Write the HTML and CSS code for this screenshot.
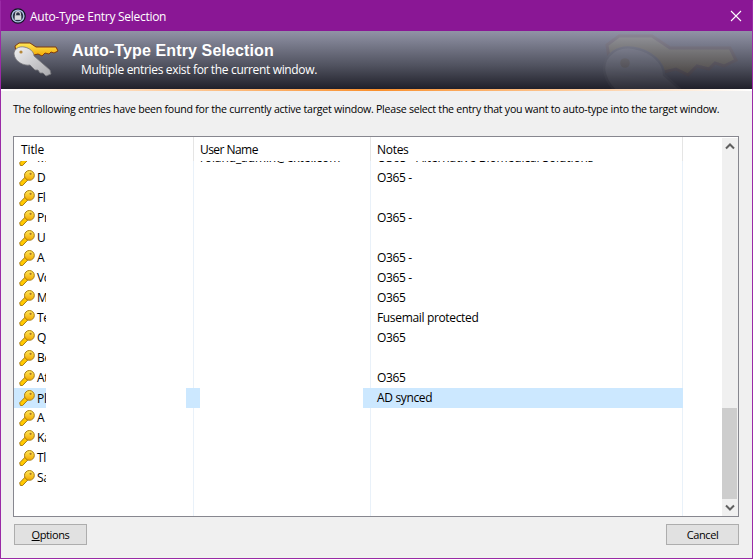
FILE: index.html
```html
<!DOCTYPE html>
<html lang="en">
<head>
<meta charset="utf-8">
<title>Auto-Type Entry Selection</title>
<link rel="stylesheet" href="styles.css">
</head>
<body>
<svg class="defs" width="0" height="0" aria-hidden="true">
  <defs>
    <linearGradient id="gold" x1="0" y1="0" x2="0" y2="1"><stop offset="0" stop-color="#ffe95a"/><stop offset="1" stop-color="#f2a800"/></linearGradient>
    <linearGradient id="silver" x1="0" y1="0" x2="1" y2="1"><stop offset="0" stop-color="#f0f0f2"/><stop offset="1" stop-color="#a9a9ad"/></linearGradient>
    <symbol id="rowkey" viewBox="0 0 16 16">
      <path d="M.7 12.8 6.4 6.8 9.2 9.6 3.6 15.5 1.4 15.5Z" fill="#ffc800" stroke="#a97c12" stroke-width="1"/>
      <circle cx="10.4" cy="5.4" r="4.9" fill="url(#gold)" stroke="#a97c12" stroke-width="1"/>
      <circle cx="11.6" cy="3.8" r="1.1" fill="#a9752a"/>
    </symbol>
    <symbol id="bigkey" viewBox="0 0 48 40">
      <path d="M3 6 7 3 18 3 24 7 44 7 46 11 42 13 39 12 37 14 33 13 30 16 26 14 22 15 14 14 4 12Z" fill="url(#gold)" stroke="#7e3a10" stroke-width="1"/>
      <path d="M2 14C2 9 7 6 12 7 18 8 22 12 22 16L38 30 39 34 34 36 31 33 28 33 26 30 23 30 18 25C12 26 3 22 2 14Z" fill="url(#silver)" stroke="#77777c" stroke-width=".8"/>
      <circle cx="9" cy="12" r="1.6" fill="#b5873a"/>
    </symbol>
  </defs>
</svg>
<div class="window">
  <header class="titlebar">
    <svg class="winicon" viewBox="0 0 16 16" width="16" height="16">
      <circle cx="8" cy="8" r="7.2" fill="#a9bde2" stroke="#10131f" stroke-width="1.2"/>
      <circle cx="8" cy="8" r="5.2" fill="#2c3046"/>
      <path d="M5.6 7.4V6a2.4 2.4 0 0 1 4.8 0v1.4" fill="none" stroke="#d8d8de" stroke-width="1.1"/>
      <rect x="4.7" y="7.3" width="6.6" height="4.6" fill="#d8d8de"/>
    </svg>
    <span class="wintitle">Auto-Type Entry Selection</span>
    <svg class="close" viewBox="0 0 12 12" width="12" height="12"><path d="M1 1 11 11M11 1 1 11" stroke="#fff" stroke-width="1.1"/></svg>
  </header>
  <section class="banner">
    <svg class="watermark" width="144" height="120"><use href="#bigkey"/></svg>
    <svg class="bannerkey" width="48" height="40"><use href="#bigkey"/></svg>
    <div class="bannertext">
      <h1>Auto-Type Entry Selection</h1>
      <p>Multiple entries exist for the current window.</p>
    </div>
  </section>
  <div class="rule"></div>
  <main class="content">
    <p class="intro">The following entries have been found for the currently active target window. Please select the entry that you want to auto-type into the target window.</p>
    <div class="list">
      <div class="listmain">
        <div class="listhead">
          <div class="hcell h1">Title</div>
          <div class="hcell h2">User Name</div>
          <div class="hcell h3">Notes</div>
        </div>
        <div class="rows">
          <div class="row first"><div class="c-title"><svg class="k" width="16" height="16"><use href="#rowkey"/></svg><span>M</span></div><div class="c-gap"></div><div class="c-tail"></div><div class="c-user">roland_admin@extel.com</div><div class="c-notes">O365 - Alternative Biomedical Solutions</div></div>
          <div class="row"><div class="c-title"><svg class="k" width="16" height="16"><use href="#rowkey"/></svg><span>D</span></div><div class="c-gap"></div><div class="c-tail"></div><div class="c-user"></div><div class="c-notes">O365 -</div></div>
          <div class="row"><div class="c-title"><svg class="k" width="16" height="16"><use href="#rowkey"/></svg><span>Fl</span></div><div class="c-gap"></div><div class="c-tail"></div><div class="c-user"></div><div class="c-notes"></div></div>
          <div class="row"><div class="c-title"><svg class="k" width="16" height="16"><use href="#rowkey"/></svg><span>Pr</span></div><div class="c-gap"></div><div class="c-tail"></div><div class="c-user"></div><div class="c-notes">O365 -</div></div>
          <div class="row"><div class="c-title"><svg class="k" width="16" height="16"><use href="#rowkey"/></svg><span>U</span></div><div class="c-gap"></div><div class="c-tail"></div><div class="c-user"></div><div class="c-notes"></div></div>
          <div class="row"><div class="c-title"><svg class="k" width="16" height="16"><use href="#rowkey"/></svg><span>A</span></div><div class="c-gap"></div><div class="c-tail"></div><div class="c-user"></div><div class="c-notes">O365 -</div></div>
          <div class="row"><div class="c-title"><svg class="k" width="16" height="16"><use href="#rowkey"/></svg><span>Vo</span></div><div class="c-gap"></div><div class="c-tail"></div><div class="c-user"></div><div class="c-notes">O365 -</div></div>
          <div class="row"><div class="c-title"><svg class="k" width="16" height="16"><use href="#rowkey"/></svg><span>M</span></div><div class="c-gap"></div><div class="c-tail"></div><div class="c-user"></div><div class="c-notes">O365</div></div>
          <div class="row"><div class="c-title"><svg class="k" width="16" height="16"><use href="#rowkey"/></svg><span>Te</span></div><div class="c-gap"></div><div class="c-tail"></div><div class="c-user"></div><div class="c-notes">Fusemail protected</div></div>
          <div class="row"><div class="c-title"><svg class="k" width="16" height="16"><use href="#rowkey"/></svg><span>Q</span></div><div class="c-gap"></div><div class="c-tail"></div><div class="c-user"></div><div class="c-notes">O365</div></div>
          <div class="row"><div class="c-title"><svg class="k" width="16" height="16"><use href="#rowkey"/></svg><span>Be</span></div><div class="c-gap"></div><div class="c-tail"></div><div class="c-user"></div><div class="c-notes"></div></div>
          <div class="row"><div class="c-title"><svg class="k" width="16" height="16"><use href="#rowkey"/></svg><span>At</span></div><div class="c-gap"></div><div class="c-tail"></div><div class="c-user"></div><div class="c-notes">O365</div></div>
          <div class="row selected"><div class="c-title"><svg class="k" width="16" height="16"><use href="#rowkey"/></svg><span>Pl</span></div><div class="c-gap"></div><div class="c-tail"></div><div class="c-user"></div><div class="c-notes">AD synced</div></div>
          <div class="row"><div class="c-title"><svg class="k" width="16" height="16"><use href="#rowkey"/></svg><span>A</span></div><div class="c-gap"></div><div class="c-tail"></div><div class="c-user"></div><div class="c-notes"></div></div>
          <div class="row"><div class="c-title"><svg class="k" width="16" height="16"><use href="#rowkey"/></svg><span>Ka</span></div><div class="c-gap"></div><div class="c-tail"></div><div class="c-user"></div><div class="c-notes"></div></div>
          <div class="row"><div class="c-title"><svg class="k" width="16" height="16"><use href="#rowkey"/></svg><span>Tl</span></div><div class="c-gap"></div><div class="c-tail"></div><div class="c-user"></div><div class="c-notes"></div></div>
          <div class="row"><div class="c-title"><svg class="k" width="16" height="16"><use href="#rowkey"/></svg><span>Sa</span></div><div class="c-gap"></div><div class="c-tail"></div><div class="c-user"></div><div class="c-notes"></div></div>
        </div>
      </div>
      <div class="scrollbar">
        <svg class="arrow" viewBox="0 0 16 17" width="16" height="17"><path d="M4 10.5 8 6.5 12 10.5" fill="none" stroke="#606060" stroke-width="2"/></svg>
        <div class="track"><div class="thumb"></div></div>
        <svg class="arrow" viewBox="0 0 16 17" width="16" height="17"><path d="M4 6.5 8 10.5 12 6.5" fill="none" stroke="#606060" stroke-width="2"/></svg>
      </div>
    </div>
    <footer class="buttons">
      <button class="btn" type="button"><u>O</u>ptions</button>
      <button class="btn" type="button">Cancel</button>
    </footer>
  </main>
</div>
</body>
</html>
```
FILE: styles.css
```css
* { box-sizing: border-box; }
html, body { margin: 0; padding: 0; }
body { width: 753px; height: 559px; overflow: hidden; font-family: "Open Sans", "Noto Sans", sans-serif; font-size: 12px; color: #000; background: #f0f0f0; }
.defs { display: block; height: 0; }
.window { width: 753px; height: 559px; display: flex; flex-direction: column; border: 1px solid #9a2aa6; border-top-color: #8a1795; background: #f0f0f0; }

.titlebar { height: 30px; flex: none; display: flex; align-items: center; padding: 0 10px 0 9px; background: #8a1795; color: #fff; }
.winicon { flex: none; margin-right: 4px; }
.wintitle { flex: 1; font-size: 12px; letter-spacing: -.28px; color: #fff; }
.close { flex: none; }

.banner { height: 58px; flex: none; position: relative; overflow: hidden; background: linear-gradient(#9193a6, #50525f 60%, #20202a); color: #fff; }
.bannerkey { position: absolute; left: 11px; top: 9px; }
.watermark { position: absolute; left: 597px; top: -4px; opacity: .07; }
.bannertext { position: relative; padding: 10px 0 0 71px; }
.banner h1 { margin: 0; font: bold 16px/20px "Liberation Sans", sans-serif; letter-spacing: .12px; color: #fff; }
.banner p { margin: 1px 0 0 9px; font-size: 12px; line-height: 16px; letter-spacing: -.34px; }

.rule { height: 2px; flex: none; background: linear-gradient(90deg, #fff 0, #f98f2c 50%, #fff 100%); }

.content { flex: 1; display: flex; flex-direction: column; padding: 0 13px 12px 12px; min-height: 0; }
.intro { margin: 10px 0 0; line-height: 16px; white-space: nowrap; font-size: 10.6px; letter-spacing: -.25px; color: #000; }

.list { margin-top: 19px; height: 381px; flex: none; display: flex; border: 1px solid #87878f; background: #fff; }
.listmain { width: 708px; flex: none; display: flex; flex-direction: column; min-height: 0; }
.listhead { height: 24px; flex: none; display: flex; background: linear-gradient(#e5e5e5, #e5e5e5) 179px 0 / 1px 100% no-repeat, linear-gradient(#e5e5e5, #e5e5e5) 356px 0 / 1px 100% no-repeat, linear-gradient(#e5e5e5, #e5e5e5) 668px 0 / 1px 100% no-repeat; }
.hcell { line-height: 26px; letter-spacing: -.3px; color: #000; }
.h1 { width: 179px; padding-left: 7px; letter-spacing: -.12px; }
.h2 { width: 177px; padding-left: 7px; letter-spacing: -.55px; }
.h3 { padding-left: 7px; }

.rows { flex: 1; min-height: 0; overflow: hidden; background: linear-gradient(#e9f1f9, #e9f1f9) 179px 0 / 1px 100% no-repeat, linear-gradient(#e9f1f9, #e9f1f9) 356px 0 / 1px 100% no-repeat, linear-gradient(#e9f1f9, #e9f1f9) 668px 0 / 1px 100% no-repeat; }
.row { height: 20px; display: flex; line-height: 20px; letter-spacing: -.34px; white-space: nowrap; }
.row.first { margin-top: -13px; letter-spacing: -.1px; }
.c-title { width: 32px; flex: none; padding-left: 5px; display: flex; align-items: center; overflow: hidden; }
.k { flex: none; margin-right: 2px; }
.c-gap { width: 140px; flex: none; }
.c-tail { width: 14px; flex: none; }
.c-user { width: 163px; flex: none; }
.c-notes { width: 320px; flex: none; padding-left: 14px; overflow: hidden; }
.selected .c-title, .selected .c-tail, .selected .c-notes { background: #cce8ff; padding-top: 1px; }
.selected .c-title .k { margin-top: -1px; }
.selected .c-notes { line-height: 18px; }

.scrollbar { width: 16px; margin: 1px 0 0 0; flex: none; display: flex; flex-direction: column; background: #f0f0f0; }
.arrow { flex: none; display: block; }
.track { flex: 1; min-height: 0; display: flex; flex-direction: column; justify-content: flex-end; }
.thumb { height: 91px; width: 15px; background: #cdcdcd; }

.buttons { margin-top: 7px; padding-left: 1px; display: flex; justify-content: space-between; }
.btn { width: 73px; height: 21px; padding: 0; border: 1px solid #adadad; background: #e1e1e1; font: inherit; font-size: 11px; letter-spacing: -.4px; color: #000; line-height: 17px; }
```
